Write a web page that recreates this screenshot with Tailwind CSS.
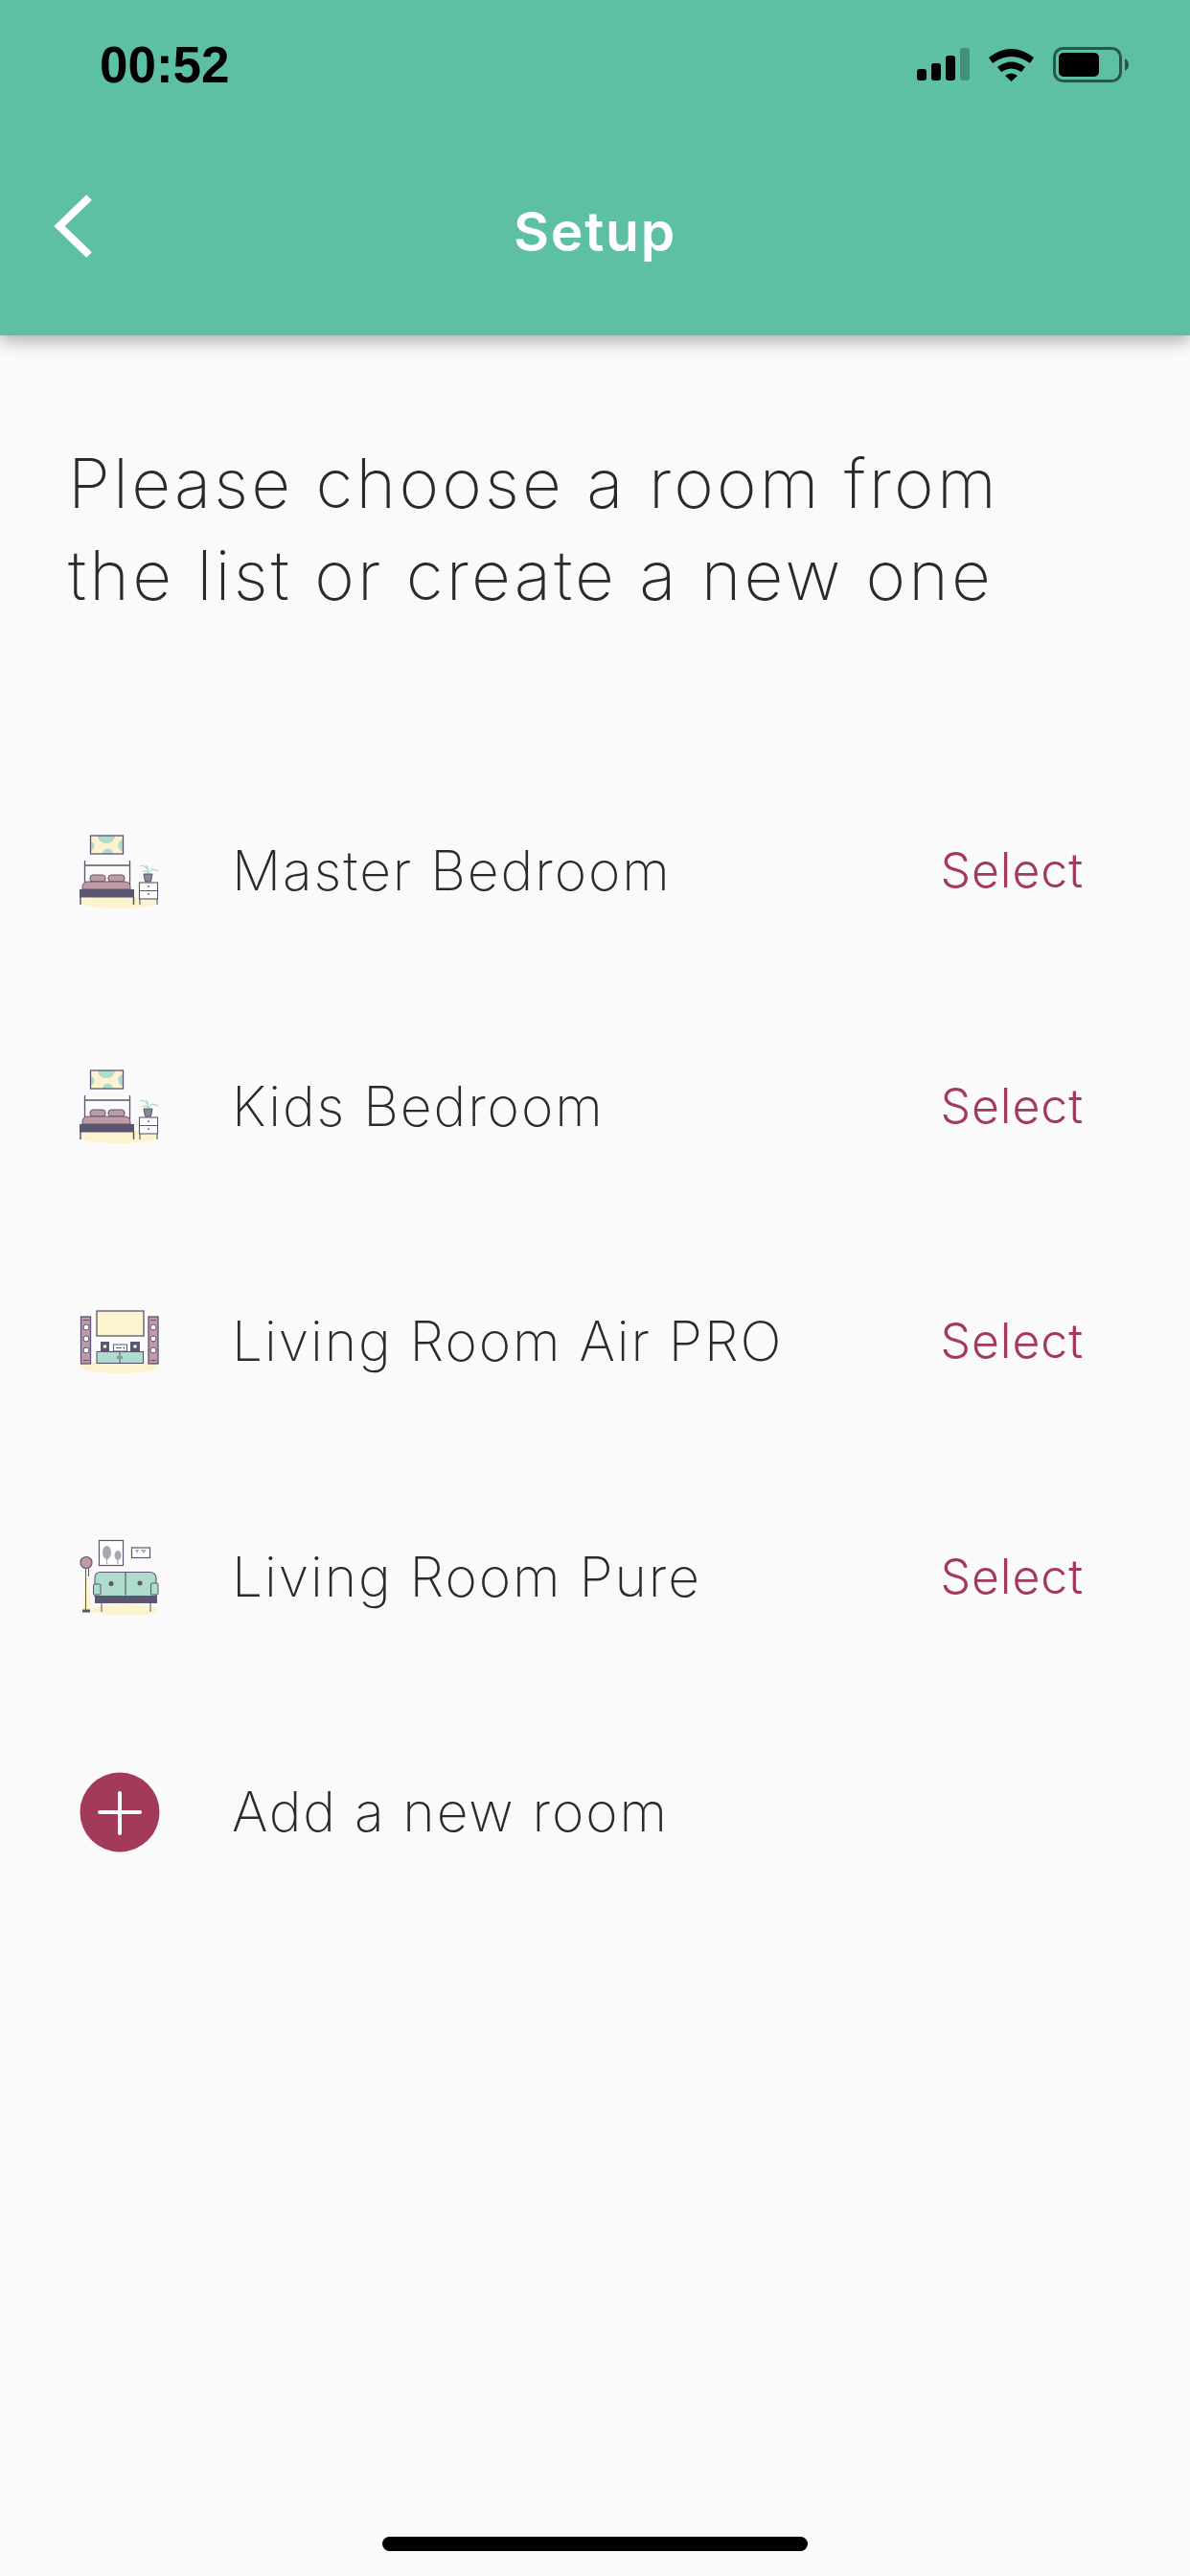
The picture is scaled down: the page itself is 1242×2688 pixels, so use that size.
<!DOCTYPE html>
<html lang="en">
<head>
  <meta charset="UTF-8" />
  <title>Setup</title>
  <script src="https://cdn.jsdelivr.net/npm/@tailwindcss/browser@4"></script>
</head>
<body class="bg-[#fafafa] h-[2688px] w-[1242px] overflow-hidden flex flex-col font-['Inter',sans-serif] text-[#2a2a2e]">

<!-- icon symbols, coords taken from a 130x110 box -->
<svg class="hidden">
  <symbol id="bed" viewBox="0 0 130 110">
    <ellipse cx="64" cy="90" rx="41" ry="7" fill="#fdf3cf"/>
    <rect x="34.500" y="21" width="34" height="19" fill="#fdf3cf"/>
    <path d="M42 21a9 8 0 0 0 18 0zM35 27a5 5 0 0 1 0 9.500zM68 25a6.500 6.500 0 0 0 0 12.500zM47 40a5.500 5.500 0 0 1 11 0z" fill="#aedccd"/>
    <rect x="34.500" y="21" width="34" height="19" fill="none" stroke="#5a5570" stroke-width="1.300"/>
    <path d="M28.500 47v25M75.500 47v25M28.500 52h47" stroke="#5a5570" stroke-width="1.300" fill="none"/>
    <rect x="34" y="62" width="16" height="7" rx="3" fill="#c09ba5" stroke="#5a5570" stroke-width="1"/>
    <rect x="53" y="62" width="17" height="7" rx="3" fill="#c09ba5" stroke="#5a5570" stroke-width="1"/>
    <path d="M26 77v-2q0-6 6-6h38q6 0 6 6v2z" fill="#c09ba5" stroke="#5a5570" stroke-width="1"/>
    <rect x="23" y="77" width="57" height="8.500" fill="#5a5570"/>
    <path d="M24 85v8M79.500 85v8" stroke="#5a5570" stroke-width="1.500"/>
    <path d="M94 56c-3-4-6-4-8-3M94 60c1-4 0-7-2-8M95 60c2-4 4-5 10-2M94 59c-2-1-4-1-5 0" stroke="#aedccd" stroke-width="1.300" fill="none"/>
    <path d="M90 61h9l-1.500 8h-6z" fill="#8a8894" stroke="#5a5570" stroke-width="1"/>
    <rect x="85.500" y="70" width="19" height="17" fill="#fff" stroke="#5a5570" stroke-width="1.100"/>
    <path d="M85.500 78.500h19M86 87v6M104 87v6" stroke="#5a5570" stroke-width="1.100"/>
    <circle cx="95" cy="74" r=".9" fill="#5a5570"/><circle cx="95" cy="82" r=".9" fill="#5a5570"/>
  </symbol>
  <symbol id="tv" viewBox="0 0 130 110">
    <ellipse cx="64" cy="81" rx="41" ry="7" fill="#fdf3cf"/>
    <rect x="41" y="23" width="49" height="26" fill="#fdf3cf" stroke="#5a5570" stroke-width="1.300"/>
    <rect x="24.500" y="29" width="10" height="49" fill="#c09ba5" stroke="#5a5570" stroke-width="1.300"/>
    <rect x="95" y="29" width="10" height="49" fill="#c09ba5" stroke="#5a5570" stroke-width="1.300"/>
    <g fill="#fff" stroke="#5a5570" stroke-width="1"><circle cx="30" cy="40" r="3"/><circle cx="30" cy="52" r="3"/><circle cx="30" cy="64" r="3"/><circle cx="100" cy="40" r="3"/><circle cx="100" cy="52" r="3"/><circle cx="100" cy="64" r="3"/></g>
    <path d="M27 32.500h6M27 74.500h6M97 32.500h6M97 74.500h6" stroke="#5a5570"/>
    <rect x="45" y="55" width="9" height="10" fill="#5a5570"/><rect x="76" y="55" width="10" height="10" fill="#5a5570"/>
    <circle cx="49.500" cy="60" r="1.800" fill="#fff"/><circle cx="81" cy="60" r="1.800" fill="#fff"/>
    <rect x="58.500" y="58" width="14" height="7" fill="#fff" stroke="#5a5570" stroke-width="1"/>
    <path d="M61 61.500h6" stroke="#5a5570"/><circle cx="69.500" cy="61.500" r="1" fill="#5a5570"/>
    <rect x="41" y="65.500" width="48.500" height="12" fill="#aedccd" stroke="#5a5570" stroke-width="1.100"/>
    <path d="M65 65.500v12M63 70v3M67 70v3" stroke="#5a5570" stroke-width="1"/>
  </symbol>
  <symbol id="sofa" viewBox="0 0 130 110">
    <ellipse cx="70" cy="89" rx="35" ry="6" fill="#fdf3cf"/>
    <path d="M30 45L26 90h10z" fill="#fdf3cf"/>
    <rect x="43.500" y="16.500" width="25" height="26" fill="#fff" stroke="#5a5570" stroke-width="1.200"/>
    <ellipse cx="51.500" cy="29" rx="4.500" ry="7" fill="#a9a7b2"/><path d="M51.500 30v11" stroke="#a9a7b2" stroke-width="1.200"/>
    <ellipse cx="63" cy="32" rx="3.500" ry="5" fill="#a9a7b2"/><path d="M63 33v8" stroke="#a9a7b2" stroke-width="1.200"/>
    <rect x="77.500" y="24" width="19" height="10.500" fill="#fff" stroke="#5a5570" stroke-width="1.200"/>
    <path d="M81 26h4l-2 4zM87 26h6l-3 4z" fill="#a9a7b2"/>
    <circle cx="30" cy="39.500" r="6" fill="#c09ba5" stroke="#5a5570" stroke-width="1.200"/>
    <path d="M29.500 46v44M32.500 46v8" stroke="#5a5570" stroke-width="1" fill="none"/>
    <rect x="26" y="88.500" width="8" height="3" fill="#5a5570"/>
    <path d="M39 62v-6q0-6.500 6-6.500h51q7 0 7 6.500v6l-0 13h-64z" fill="#aedccd" stroke="#5a5570" stroke-width="1.100"/>
    <path d="M71 49.500v24" stroke="#5a5570" stroke-width="1.200"/>
    <rect x="37.500" y="62" width="7.500" height="11" rx="1" fill="#aedccd" stroke="#5a5570" stroke-width="1"/>
    <rect x="97.500" y="61" width="7.500" height="12" rx="1" fill="#aedccd" stroke="#5a5570" stroke-width="1"/>
    <circle cx="56" cy="61.500" r="2.500" fill="#5a5570"/><circle cx="86" cy="61" r="2.500" fill="#5a5570"/>
    <rect x="39" y="74" width="65" height="8" fill="#5a5570"/>
    <path d="M46 82v9M97 82v9" stroke="#8a8894" stroke-width="1.500"/>
  </symbol>
</svg>

<!-- header -->
<header class="relative z-10 h-[350px] shrink-0 bg-[#5dc0a4] shadow-[0_6px_16px_rgba(0,0,0,0.3)] flex flex-col">
  <!-- status bar -->
  <div class="h-[132px] shrink-0 flex justify-between items-center pl-[104px] pr-[64px] pt-[2px]">
    <span class="font-['Liberation_Sans',sans-serif] font-bold text-[53px] leading-none text-black">00:52</span>
    <svg width="221" height="37" viewBox="957 49 221 37">
      <g fill="#000">
        <rect x="957" y="72" width="10" height="12" rx="3"/><rect x="972" y="66" width="10" height="18" rx="3"/><rect x="987" y="58" width="10" height="26" rx="3"/>
      </g>
      <rect x="1002" y="50" width="10" height="34" rx="3" fill="#000" fill-opacity=".25"/>
      <path d="M1032 60q23.500-18 47 0l-4 6q-19.500-14-39 0zM1041 70q14.500-11 29 0l-4 5q-10.500-7-21 0zM1049 79q6.500-5 13 0l-6.500 6z" fill="#000"/>
      <rect x="1100.500" y="50.500" width="69" height="34" rx="9" fill="none" stroke="#000" stroke-opacity=".55" stroke-width="3"/>
      <rect x="1105" y="55" width="42" height="25" rx="5" fill="#000"/>
      <path d="M1174 61q4 2 4 6.500t-4 6.500z" fill="#000" fill-opacity=".55"/>
    </svg>
  </div>
  <!-- nav -->
  <div class="relative flex-1 flex items-center justify-center pb-[84px] -mt-[2px]">
    <svg class="absolute left-[56px] top-[73px]" width="42" height="66" viewBox="0 0 42 66"><path d="M37 3L6 33l31 30" fill="none" stroke="#fff" stroke-width="8"/></svg>
    <h1 class="font-semibold text-[57px] leading-none tracking-[1.700px] text-white mt-[83px]">Setup</h1>
  </div>
</header>

<main class="flex-1 flex flex-col">
  <p class="pt-[106px] pl-[71px] font-extralight text-[71px] leading-[96px] tracking-[3.200px]">Please choose a room from<br>the list or create a new one</p>

  <ul class="mt-[138px] text-[57px] font-extralight tracking-[1.900px]">
    <li class="h-[245.6px] flex items-center pl-[60px] pr-[111px]">
      <svg class="shrink-0 mr-[52px]" width="130" height="110" viewBox="0 3 130 110"><use href="#bed" width="130" height="110"/></svg>
      <span class="flex-1">Master Bedroom</span>
      <span class="text-[#a33a5a] font-light text-[50px] tracking-[0.900px]">Select</span>
    </li>
    <li class="h-[245.6px] flex items-center pl-[60px] pr-[111px]">
      <svg class="shrink-0 mr-[52px]" width="130" height="110" viewBox="0 3 130 110"><use href="#bed" width="130" height="110"/></svg>
      <span class="flex-1">Kids Bedroom</span>
      <span class="text-[#a33a5a] font-light text-[50px] tracking-[0.900px]">Select</span>
    </li>
    <li class="h-[245.6px] flex items-center pl-[60px] pr-[111px]">
      <svg class="shrink-0 mr-[52px]" width="130" height="110" viewBox="0 0 130 110"><use href="#tv" width="130" height="110"/></svg>
      <span class="flex-1">Living Room Air PRO</span>
      <span class="text-[#a33a5a] font-light text-[50px] tracking-[0.900px]">Select</span>
    </li>
    <li class="h-[245.6px] flex items-center pl-[60px] pr-[111px]">
      <svg class="shrink-0 mr-[52px]" width="130" height="110" viewBox="0 0 130 110"><use href="#sofa" width="130" height="110"/></svg>
      <span class="flex-1">Living Room Pure</span>
      <span class="text-[#a33a5a] font-light text-[50px] tracking-[0.900px]">Select</span>
    </li>
    <li class="h-[245.6px] flex items-center pl-[60px] pr-[111px]">
      <div class="shrink-0 w-[130px] h-[110px] mr-[52px] flex items-center justify-center">
        <svg class="-mt-[1px]" width="84" height="84" viewBox="0 0 84 84"><circle cx="42" cy="42" r="41.500" fill="#a33a5a"/><path d="M42 22v42M21 42h42" stroke="#fff" stroke-width="4" stroke-linecap="round"/></svg>
      </div>
      <span class="flex-1">Add a new room</span>
    </li>
  </ul>
</main>

<div class="shrink-0 h-[15px] w-[444px] mx-auto mb-[26px] rounded-full bg-black"></div>
</body>
</html>
